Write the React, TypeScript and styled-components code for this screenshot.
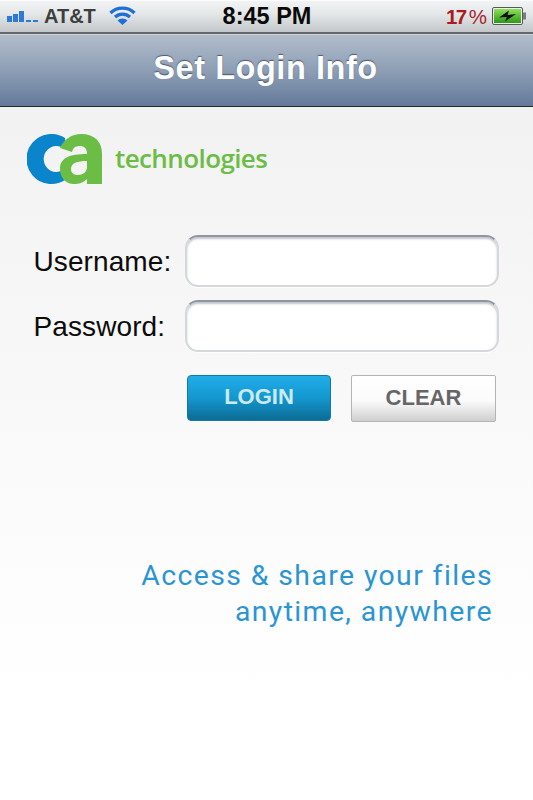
import React from "react";
import styled, { createGlobalStyle } from "styled-components";

const GlobalStyle = createGlobalStyle`
  html, body {
    margin: 0;
    padding: 0;
    background: #fff;
  }
`;

const Screen = styled.div`
  width: 533px;
  height: 800px;
  display: flex;
  flex-direction: column;
  overflow: hidden;
  font-family: "Liberation Sans", Arial, sans-serif;
`;

const StatusBar = styled.div`
  height: 32px;
  flex: none;
  display: grid;
  grid-template-columns: 1fr auto 1fr;
  align-items: center;
  padding: 0 6px 0 7px;
  background: linear-gradient(#f2f4f5, #e6e9ea 40%, #c3c7c9);
  border-bottom: 2px solid #63686d;
  box-shadow: inset 0 1px 0 #fafbfb;
`;

const StatusLeft = styled.div`
  display: flex;
  align-items: center;
`;

const Carrier = styled.span`
  margin-left: 5px;
  margin-top: 1px;
  font-size: 20px;
  font-weight: bold;
  color: #3c3e40;
`;

const WifiIcon = styled.svg`
  margin-left: 13px;
  margin-top: -1px;
`;

const Clock = styled.span`
  font-size: 23.5px;
  font-weight: bold;
  color: #0a0a0a;
  margin-top: 1px;
`;

const StatusRight = styled.div`
  display: flex;
  justify-content: flex-end;
  align-items: center;
  gap: 5px;
`;

const Percent = styled.span`
  font-size: 20.5px;
  color: #a5262c;
  margin-top: 1px;

  b {
    letter-spacing: -1.5px;
    margin-right: 3px;
    color: #ac1a20;
  }
`;

const NavBar = styled.div`
  height: 71px;
  flex: none;
  display: flex;
  align-items: center;
  justify-content: center;
  background: linear-gradient(#b2bdcb, #8d9eb5 50%, #64799a);
  border-top: 1px solid #d0d3d6;
  border-bottom: 1px solid #26282c;
`;

const Title = styled.h1`
  margin: 0 2px 5px 0;
  font-size: 32.5px;
  font-weight: bold;
  letter-spacing: 0.55px;
  color: #fff;
  text-shadow: 0 -1px 1px rgba(50, 60, 80, 0.75);
`;

const Body = styled.div`
  flex: 1;
  display: flex;
  flex-direction: column;
  background: linear-gradient(#f2f2f2, #f9f9f9 45%, #fff 85%);
`;

const LogoRow = styled.div`
  display: flex;
  align-items: flex-start;
  padding: 27px 0 0 27px;
  height: 52px;
`;

const LogoWord = styled.span`
  margin-left: 11px;
  margin-top: 6px;
  font-family: "Open Sans", sans-serif;
  font-size: 26px;
  font-weight: 600;
  letter-spacing: -0.6px;
  line-height: 36px;
  color: #6cbd45;
`;

const Form = styled.div`
  display: flex;
  flex-direction: column;
  gap: 13px;
  margin-top: 49px;
  padding-left: 33.5px;
`;

const Row = styled.div`
  display: grid;
  grid-template-columns: 151.5px 314px;
  align-items: center;
`;

const Label = styled.label`
  padding-top: 1px;
  font-size: 28px;
  letter-spacing: 0.1px;
  color: #0c0c0c;
`;

const Field = styled.input`
  box-sizing: border-box;
  width: 314px;
  height: 52px;
  border: 2px solid #d4d7db;
  border-top-color: #8f96a3;
  border-radius: 13px;
  background: #fff;
  box-shadow: inset 0 2px 2px rgba(120, 128, 140, 0.45), 0 1px 0 #fff;
  outline: none;
`;

const Actions = styled.div`
  display: flex;
  gap: 20px;
  margin: 23px 0 0 187px;
`;

const ActionButton = styled.button<{ primary?: boolean }>`
  box-sizing: border-box;
  width: ${(props) => (props.primary ? "144px" : "145px")};
  height: ${(props) => (props.primary ? "46px" : "47px")};
  padding: 0 0 2px;
  font-family: "Liberation Sans", Arial, sans-serif;
  font-size: 22px;
  font-weight: bold;
  border-radius: ${(props) => (props.primary ? "4px" : "2px")};
  color: ${(props) => (props.primary ? "#cdeaf8" : "#666")};
  border: 1px solid ${(props) => (props.primary ? "#107aa4" : "#b4b4b4")};
  background: ${(props) =>
    props.primary
      ? "linear-gradient(#20ade9, #1497cf 50%, #0c6c95)"
      : "linear-gradient(#fff, #fbfbfb 55%, #cfcfcf)"};
`;

const Tagline = styled.p`
  margin: 136px 40px 0 0;
  text-align: right;
  font-family: Roboto, sans-serif;
  font-size: 28.4px;
  font-weight: 400;
  line-height: 36px;
  letter-spacing: 1.4px;
  color: #2b95d3;
`;

function SignalBars() {
  return (
    <svg width="32" height="12" viewBox="0 0 32 12">
      <rect x="0" y="6" width="5" height="6" fill="#2f78d8" />
      <rect x="6" y="4" width="5" height="8" fill="#2f78d8" />
      <rect x="12" y="1" width="5" height="11" fill="#2f78d8" />
      <rect x="19" y="10" width="5" height="2" fill="#2f78d8" />
      <rect x="26" y="10" width="5" height="2" fill="#2f78d8" />
    </svg>
  );
}

function Wifi() {
  return (
    <WifiIcon width="27" height="21" viewBox="0 0 27 21">
      <path d="M1.5 8 A17 17 0 0 1 25.5 8" fill="none" stroke="#1f6fd6" strokeWidth="3.2" />
      <path d="M6 12 A11 11 0 0 1 21 12" fill="none" stroke="#1f6fd6" strokeWidth="3.2" />
      <path d="M13.5 20 L8.5 15.5 A7 7 0 0 1 18.5 15.5 Z" fill="#1f6fd6" />
    </WifiIcon>
  );
}

function Battery() {
  return (
    <svg width="35" height="18" viewBox="0 0 35 18">
      <defs>
        <linearGradient id="charge" x1="0" y1="0" x2="0" y2="1">
          <stop offset="0" stopColor="#8fe05a" />
          <stop offset="1" stopColor="#2b9a12" />
        </linearGradient>
      </defs>
      <rect x="0.5" y="0.5" width="30" height="17" rx="1.5" fill="#eef0ee" stroke="#55595c" />
      <rect x="2" y="2" width="27" height="14" fill="url(#charge)" />
      <rect x="31" y="5.5" width="3" height="7" fill="#787c80" />
      <path d="M7 10.5 L17 3.5 L15.5 8 L24 7 L13 14.5 L14.8 10 Z" fill="#111" />
    </svg>
  );
}

function CaLogo() {
  return (
    <svg width="77" height="52" viewBox="0 0 77 52">
      <path d="M38 4 A25 25 0 1 0 38 46 L38 35 A13 13 0 1 1 38 15 Z" fill="#0a85cc" />
      <path
        fillRule="evenodd"
        d="M33 14 C37 5 45 0 54 0 C68 0 75 8 75 20 L75 50 L60 50 L60 45 C56 49 52 50 47 50 C38 50 33 43 33 35 C33 24 42 20 60 20 C60 14 57 12 53 12 C48 12 46 14 45 18 Z M60 27 C50 27 44 29 44 35 C44 39 47 41 51 41 C56 41 60 38 60 33 Z"
        fill="#6cbd45"
      />
    </svg>
  );
}

export default function App() {
  return (
    <Screen>
      <GlobalStyle />
      <StatusBar>
        <StatusLeft>
          <SignalBars />
          <Carrier>AT&amp;T</Carrier>
          <Wifi />
        </StatusLeft>
        <Clock>8:45 PM</Clock>
        <StatusRight>
          <Percent>
            <b>17</b>%
          </Percent>
          <Battery />
        </StatusRight>
      </StatusBar>
      <NavBar>
        <Title>Set Login Info</Title>
      </NavBar>
      <Body>
        <LogoRow>
          <CaLogo />
          <LogoWord>technologies</LogoWord>
        </LogoRow>
        <Form>
          <Row>
            <Label>Username:</Label>
            <Field type="text" />
          </Row>
          <Row>
            <Label>Password:</Label>
            <Field type="password" />
          </Row>
        </Form>
        <Actions>
          <ActionButton primary>LOGIN</ActionButton>
          <ActionButton>CLEAR</ActionButton>
        </Actions>
        <Tagline>
          Access &amp; share your files
          <br />
          anytime, anywhere
        </Tagline>
      </Body>
    </Screen>
  );
}
